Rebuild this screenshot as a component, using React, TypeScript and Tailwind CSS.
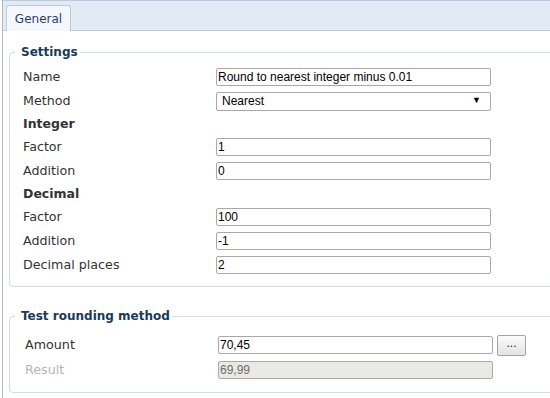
import React from "react";

const labelFont = { fontFamily: '"DejaVu Sans", Verdana, sans-serif' };

function Row({ label, children, muted }: { label: string; children: React.ReactNode; muted?: boolean }) {
  return (
    <div className="flex h-6 items-center">
      <div className={`w-[193px] text-[12.7px] ${muted ? "text-[#b5b5b5]" : "text-[#333]"}`}>{label}</div>
      {children}
    </div>
  );
}

function TextInput({ value, disabled }: { value: string; disabled?: boolean }) {
  return (
    <input
      readOnly
      value={value}
      disabled={disabled}
      className={`h-[18px] w-[275px] rounded-[2px] border border-[#a9a9a9] px-[1px] text-[12px] outline-none font-['Liberation_Sans',Arial,sans-serif] ${
        disabled ? "bg-[#ebe9e4] text-[#6d6d6d]" : "bg-white text-black"
      }`}
    />
  );
}

function Heading({ children }: { children: React.ReactNode }) {
  return <div className="flex h-[22px] items-center text-[12.5px] font-bold text-[#333]">{children}</div>;
}

export default function App() {
  return (
    <div className="h-[398px] w-[550px] overflow-hidden bg-white" style={labelFont}>
      <div className="ml-[2px] h-full border-l border-[#aeb8c6]">
        {/* Tab strip */}
        <div className="flex h-[31px] items-end border-t border-b border-[#b9c8dc] bg-[#e2eaf6] pl-[3px]">
          <div className="mb-[-1px] flex h-[26px] w-[65px] items-center justify-center rounded-t-[3px] border border-b-0 border-[#bccadd] bg-[#f4f7fc] text-[12px] text-[#2e3a78]">
            General
          </div>
        </div>

        <div className="pl-[6px]">
          <fieldset className="mt-[13px] w-[560px] rounded-[4px] border border-[#d3dbe5] pb-[9px] pl-[13px]">
            <legend className="ml-[-8px] pl-[6px] pr-[2px] text-[12px] font-bold leading-4 text-[#173a5e]">Settings</legend>
            <div className="pt-[5px]">
              <Row label="Name">
                <TextInput value="Round to nearest integer minus 0.01" />
              </Row>
              <Row label="Method">
                <div className="flex h-[19px] w-[275px] items-center justify-between rounded-[2px] border border-[#a9a9a9] bg-white pl-[5px] pr-[9px] text-[12px] text-black font-['Liberation_Sans',Arial,sans-serif]">
                  <span>Nearest</span>
                  <span className="text-[9px]">▼</span>
                </div>
              </Row>
              <Heading>Integer</Heading>
              <Row label="Factor">
                <TextInput value="1" />
              </Row>
              <Row label="Addition">
                <TextInput value="0" />
              </Row>
              <Heading>Decimal</Heading>
              <Row label="Factor">
                <TextInput value="100" />
              </Row>
              <Row label="Addition">
                <TextInput value="-1" />
              </Row>
              <Row label="Decimal places">
                <TextInput value="2" />
              </Row>
            </div>
          </fieldset>

          <fieldset className="mt-[21px] w-[560px] rounded-[4px] border border-[#d3dbe5] pb-[10px] pl-[15px]">
            <legend className="ml-[-10px] pl-[6px] pr-[2px] text-[12px] font-bold leading-4 text-[#173a5e]">
              Test rounding method
            </legend>
            <div className="pt-[9px]">
              <div className="flex h-6 items-center">
                <div className="w-[193px] text-[12.7px] text-[#333]">Amount</div>
                <TextInput value="70,45" />
                <button className="ml-[4px] h-[21px] w-[29px] rounded-[2px] border border-[#a3a3a3] bg-gradient-to-b from-[#fbfbfb] to-[#e3e3e3] pb-[4px] text-[12px] leading-none text-[#222] font-['Liberation_Sans',Arial,sans-serif]">
                  ...
                </button>
              </div>
              <div className="mt-[1px]">
                <Row label="Result" muted>
                  <TextInput value="69,99" disabled />
                </Row>
              </div>
            </div>
          </fieldset>
        </div>
      </div>
    </div>
  );
}
